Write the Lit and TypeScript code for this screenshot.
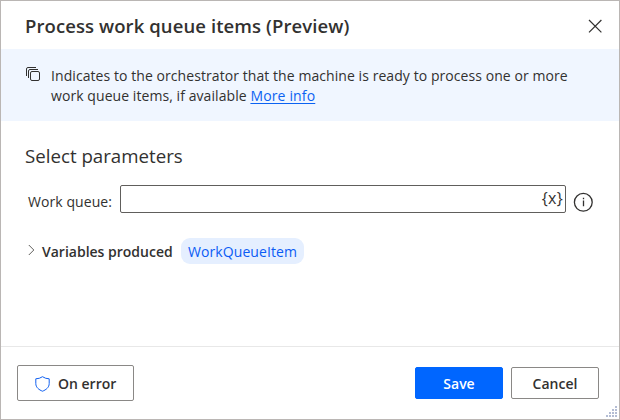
import { LitElement, html, css } from "lit";
import { customElement } from "lit/decorators.js";

@customElement("app-root")
export class AppRoot extends LitElement {
  static styles = css`
    :host { display: block; }
    * { box-sizing: border-box; }
    .dialog {
      position: relative; width: 620px; height: 420px; display: flex; flex-direction: column;
      border: 1px solid #bab6b4; background: #fff; color: #323130; overflow: hidden;
      font: 14px/20px "Open Sans", "Noto Sans", sans-serif; white-space: nowrap;
    }
    svg { display: block; flex: none; fill: none; }
    header { height: 48px; flex: none; display: flex; align-items: center; justify-content: space-between; padding: 2px 17px 0 24px; }
    h1 { margin: 0; font-size: 18.5px; line-height: 26px; font-weight: 600; letter-spacing: 0.09px; }
    .close { margin-top: -1px; }
    .banner { height: 72px; flex: none; display: flex; background: #f0f6ff; padding: 17px 0 0 25px; gap: 10px; }
    .banner p { margin: 0; letter-spacing: 0.07px; }
    .line { display: block; }
    .more { letter-spacing: 0.15px; }
    a { color: #0b62f2; text-decoration: underline; text-underline-offset: 2px; text-decoration-thickness: 1px; }
    main { flex: 1; padding: 22px 0 0 24px; }
    h2 { margin: 0; font-size: 18.7px; line-height: 26px; font-weight: 400; }
    .field { display: flex; margin-top: 16px; height: 28px; }
    .field label { width: 92px; padding: 7px 0 0 3px; letter-spacing: 0.07px; }
    .input { width: 446px; height: 28px; margin-left: 3px; border: 1px solid #605e5c; border-radius: 2px; display: flex; justify-content: flex-end; padding: 2px 2px 0 0; }
    .var { font-size: 16px; letter-spacing: 0.3px; }
    .info { margin: 7px 0 0 7px; }
    .vars { display: flex; align-items: center; height: 26px; margin-top: 25px; padding-left: 3px; }
    .vars svg { margin-top: -2px; }
    .vars b { font-weight: 600; margin-left: 7px; width: 139px; padding-top: 1px; }
    .chip { height: 26px; width: 123px; border-radius: 9px; background: #e5efff; color: #0b5cf5; line-height: 27px; text-align: center; letter-spacing: 0.07px; }
    footer { height: 73px; flex: none; display: flex; align-items: center; border-top: 1px solid #e8e8e8; padding: 0 20px 0 16px; }
    button { font: inherit; font-weight: 600; color: #323130; height: 32px; width: 88px; padding: 1px 0 0; border: 1px solid #8a8886; border-radius: 2px; background: #fff; }
    .onerror { width: 117px; height: 36px; display: flex; align-items: center; padding: 1px 0 0 17px; gap: 8px; margin-right: auto; }
    .save { background: #0066ff; border-color: #0066ff; color: #fff; margin-right: 8px; }
    .grip { position: absolute; right: 2px; bottom: 2px; fill: #b4bdd4; }
  `;

  render() {
    return html`
      <div class="dialog">
        <header>
          <h1>Process work queue items (Preview)</h1>
          <svg class="close" width="14" height="14" stroke="#323130" stroke-width="1.2"><path d="M1 1 13.4 13.4M13.4 1 1 13.4" /></svg>
        </header>
        <section class="banner">
          <svg width="15" height="16" stroke="#323130"><rect x="4.5" y="5.5" width="9" height="9" rx="1.5" /><path d="M2.5 12V5Q2.5 3.5 4 3.5H12M.5 10V3Q.5 1.5 2 1.5H10" /></svg>
          <p>
            <span class="line">Indicates to the orchestrator that the machine is ready to process one or more</span>
            <span class="line">work queue items, if available <a class="more">More info</a></span>
          </p>
        </section>
        <main>
          <h2>Select parameters</h2>
          <div class="field">
            <label>Work queue:</label>
            <div class="input"><span class="var">{x}</span></div>
            <svg class="info" width="20" height="20" stroke="#323130" stroke-width="1.3"><circle cx="10.3" cy="10.3" r="8.9" /><path d="M10.5 8.5V14.2M10.5 5.8V7.3" /></svg>
          </div>
          <div class="vars">
            <svg width="7" height="12" stroke="#605e5c"><path d="M.8 1 5.8 6 .8 11" /></svg>
            <b>Variables produced</b>
            <span class="chip">WorkQueueItem</span>
          </div>
        </main>
        <footer>
          <button class="onerror">
            <svg width="15" height="16" stroke="#1160f0"><path d="M7.5 .7Q10.5 2.8 14.2 2.8V7.5C14.2 11.5 11 13.8 7.5 15.2C4 13.8 .8 11.5 .8 7.5V2.8Q4.5 2.8 7.5 .7Z" /></svg>
            <span>On error</span>
          </button>
          <button class="save">Save</button>
          <button class="cancel">Cancel</button>
        </footer>
        <svg class="grip" width="11" height="11"><path d="M9 0h2v2h-2zM6 3h2v2h-2zM9 3h2v2h-2zM3 6h2v2h-2zM6 6h2v2h-2zM9 6h2v2h-2zM0 9h2v2h-2zM3 9h2v2h-2zM6 9h2v2h-2zM9 9h2v2h-2z" /></svg>
      </div>
    `;
  }
}
